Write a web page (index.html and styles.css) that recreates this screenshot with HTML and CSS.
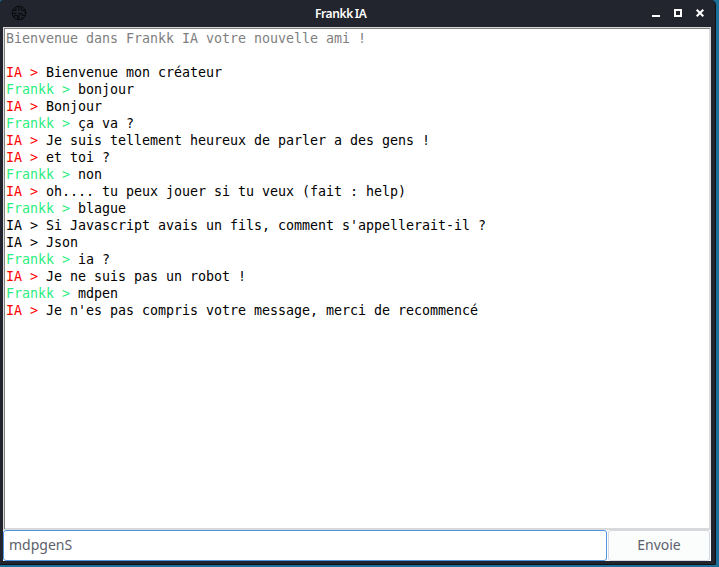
FILE: index.html
```html
<!DOCTYPE html>
<html lang="fr">
<head>
<meta charset="utf-8">
<title>Frankk IA</title>
<link rel="stylesheet" href="styles.css">
</head>
<body>
<div class="window">
  <header class="titlebar">
    <svg class="app-icon" viewBox="0 0 16 16" width="16" height="16"><circle cx="8" cy="8" r="6.8"/><path d="M8 1v5M8 8v7M2 5.5h3M5 2.5v3M1.500 8.500H5v-1M3.500 12.500v-2h3v3.500M10.500 2v3.500h3.500M8 8.500h3v2h3.500M11 12v2.500M13 7.500h2"/></svg>
    <h1 class="title">Frankk IA</h1>
    <div class="controls">
      <svg viewBox="0 0 8 8" width="8" height="8"><path class="fill" d="M0 6h8v2H0z"/></svg>
      <svg viewBox="0 0 8 8" width="8" height="8"><path class="line" d="M1 1h6v6H1z"/></svg>
      <svg viewBox="0 0 8 8" width="8" height="8"><path class="line" d="M.7.7l6.6 6.6M7.3.7L.7 7.3"/></svg>
    </div>
  </header>
  <main class="content">
    <div class="log">
      <p class="intro">Bienvenue dans Frankk IA votre nouvelle ami !</p>
      <p></p>
      <p><span class="ia">IA &gt;</span> Bienvenue mon créateur</p>
      <p><span class="user">Frankk &gt;</span> bonjour</p>
      <p><span class="ia">IA &gt;</span> Bonjour</p>
      <p><span class="user">Frankk &gt;</span> ça va ?</p>
      <p><span class="ia">IA &gt;</span> Je suis tellement heureux de parler a des gens !</p>
      <p><span class="ia">IA &gt;</span> et toi ?</p>
      <p><span class="user">Frankk &gt;</span> non</p>
      <p><span class="ia">IA &gt;</span> oh.... tu peux jouer si tu veux (fait : help)</p>
      <p><span class="user">Frankk &gt;</span> blague</p>
      <p>IA &gt; Si Javascript avais un fils, comment s'appellerait-il ?</p>
      <p>IA &gt; Json</p>
      <p><span class="user">Frankk &gt;</span> ia ?</p>
      <p><span class="ia">IA &gt;</span> Je ne suis pas un robot !</p>
      <p><span class="user">Frankk &gt;</span> mdpen</p>
      <p><span class="ia">IA &gt;</span> Je n'es pas compris votre message, merci de recommencé</p>
    </div>
    <form class="entry">
      <input class="field" type="text" value="mdpgenS">
      <button class="send" type="button">Envoie</button>
    </form>
  </main>
</div>
</body>
</html>
```
FILE: styles.css
```css
* { box-sizing: border-box; }
html, body { height: 100%; }
body {
  margin: 0;
  overflow: hidden;
  background: #1b7199;
  padding: 0 3px 2px 0;
}
.window {
  height: 565px;
  display: flex;
  flex-direction: column;
  background: #23252e;
  border-right: 1px solid #101218;
  border-bottom: 1px solid #101218;
  border-radius: 3px 5px 2px 0;
  padding: 0 4px 3px 3px;
}
.titlebar {
  height: 27px;
  flex: none;
  display: grid;
  grid-template-columns: 304px 1fr auto;
  align-items: center;
  padding: 0 7px 1px 8px;
}
.app-icon { fill: none; stroke: #08090b; stroke-width: 1; }
.title {
  margin: 0;
  font: 600 12px/17px "Noto Sans", "Open Sans", sans-serif;
  letter-spacing: -0.4px;
  word-spacing: -0.8px;
  color: #fff;
}
.controls { display: flex; gap: 14px; }
.controls svg { display: block; }
.fill { fill: #fff; }
.line { fill: none; stroke: #fff; stroke-width: 2; }
.content {
  flex: 1;
  min-height: 0;
  display: flex;
  flex-direction: column;
  background: #fcfefe;
}
.log {
  flex: 1;
  background: #fff;
  border: 1px solid #d9d9d9;
  box-shadow: inset 1px 1px #828282, inset -1px -1px #d9d9d9;
  padding: 2px;
  font: 13.333px/17px "DejaVu Sans Mono", monospace;
  letter-spacing: -0.025px;
  color: #000;
}
.log p { margin: 0; height: 17px; white-space: pre; }
.log .intro { color: #7f7f7f; }
.ia { color: #f00; }
.user { color: #2bee7e; }
.entry { display: flex; gap: 1px; height: 31px; flex: none; }
.field, .send {
  margin: 0;
  font: 14px/20px "Noto Sans", sans-serif;
  color: #5c616c;
  outline: 0;
}
.field {
  width: 604px;
  border: 1px solid #5294e2;
  border-radius: 3px;
  background: #fff;
  padding: 0 5px 2px;
}
.send {
  flex: 1;
  margin-right: 1px;
  border: 1px solid #d3d8e2;
  border-radius: 3px;
  background: #fbfcfc;
  padding: 0 0 2px;
}
```
